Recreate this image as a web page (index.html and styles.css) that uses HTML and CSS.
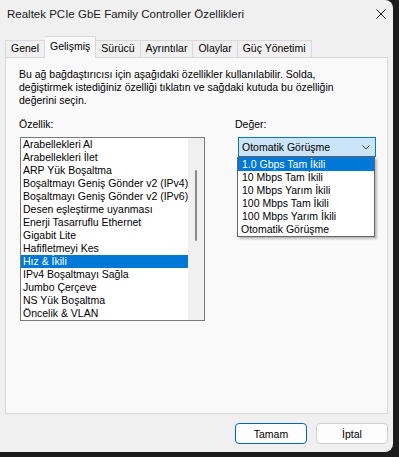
FILE: index.html
```html
<!DOCTYPE html>
<html lang="tr">
<head>
  <meta charset="UTF-8" />
  <title>Realtek PCIe GbE Family Controller Özellikleri</title>
  <link rel="stylesheet" href="styles.css">
</head>
<body>

  <div class="window">

    <!-- Başlık çubuğu -->
    <div class="titlebar">
      <span class="title">Realtek PCIe GbE Family Controller Özellikleri</span>
      <svg class="close" width="10" height="10" viewBox="0 0 10 10">
        <path d="M0.5 0.5 L9.5 9.5 M9.5 0.5 L0.5 9.5" stroke="#1a1a1a" stroke-width="1" fill="none" />
      </svg>
    </div>

    <!-- Sekmeler -->
    <div class="tabs">
      <div class="tab">Genel</div>
      <div class="tab active">Gelişmiş</div>
      <div class="tab">Sürücü</div>
      <div class="tab">Ayrıntılar</div>
      <div class="tab">Olaylar</div>
      <div class="tab">Güç Yönetimi</div>
    </div>

    <div class="panel">
      <p class="desc">
        Bu ağ bağdaştırıcısı için aşağıdaki özellikler kullanılabilir. Solda,<br>
        değiştirmek istediğiniz özelliği tıklatın ve sağdaki kutuda bu özelliğin<br>
        değerini seçin.
      </p>

      <div class="columns">
        <div class="col">
          <div class="label">Özellik:</div>
          <div class="listbox">
            <div class="items">
              <div class="item">Arabellekleri Al</div>
              <div class="item">Arabellekleri İlet</div>
              <div class="item">ARP Yük Boşaltma</div>
              <div class="item">Boşaltmayı Geniş Gönder v2 (IPv4)</div>
              <div class="item">Boşaltmayı Geniş Gönder v2 (IPv6)</div>
              <div class="item">Desen eşleştirme uyanması</div>
              <div class="item">Enerji Tasarruflu Ethernet</div>
              <div class="item">Gigabit Lite</div>
              <div class="item">Hafifletmeyi Kes</div>
              <div class="item selected">Hız &amp; İkili</div>
              <div class="item">IPv4 Boşaltmayı Sağla</div>
              <div class="item">Jumbo Çerçeve</div>
              <div class="item">NS Yük Boşaltma</div>
              <div class="item">Öncelik &amp; VLAN</div>
            </div>
            <div class="scrollbar"><div class="thumb"></div></div>
          </div>
        </div>

        <div class="col">
          <div class="label">Değer:</div>
          <div class="combo">
            <span>Otomatik Görüşme</span>
            <svg class="chevron" width="8" height="5" viewBox="0 0 8 5">
              <path d="M0.5 0.5 L4 4 L7.5 0.5" stroke="#444" stroke-width="1" fill="none" />
            </svg>
            <div class="dropdown">
              <div class="option selected">1.0 Gbps Tam İkili</div>
              <div class="option">10 Mbps Tam İkili</div>
              <div class="option">10 Mbps Yarım İkili</div>
              <div class="option">100 Mbps Tam İkili</div>
              <div class="option">100 Mbps Yarım İkili</div>
              <div class="option last">Otomatik Görüşme</div>
            </div>
          </div>
        </div>
      </div>
    </div>

    <div class="actions">
      <button class="btn default">Tamam</button>
      <button class="btn">İptal</button>
    </div>

  </div>

</body>
</html>
```

FILE: styles.css
```css
* {
  margin: 0;
  padding: 0;
  box-sizing: border-box;
}

body {
  font-family: 'Liberation Sans', Arial, sans-serif;
  font-size: 10.5px;
  color: #000;
  background: #1c1c1c;
  width: 399px;
  height: 457px;
  overflow: hidden;
}

.window {
  width: 393px;
  height: 452px;
  background: #f0f0f0;
  border-radius: 0 8px 8px 0;
}

.titlebar {
  height: 30px;
  display: flex;
  align-items: center;
  justify-content: space-between;
  padding: 0 7px 3px 7px;
  font-size: 11.5px;
  color: #1a1a1a;
}

/* tabs */
.tabs {
  display: flex;
  align-items: flex-end;
  height: 21px;
  margin: 6px 0 0 5px;
}

.tab {
  height: 17px;
  line-height: 15px;
  padding: 0 5px;
  border: 1px solid #d9d9d9;
  border-bottom: none;
  border-left: none;
  background: #f0f0f0;
}

.tab:first-child {
  border-left: 1px solid #d9d9d9;
}

.tab.active {
  height: 22px;
  margin-bottom: -1px;
  padding-top: 2px;
  line-height: 14px;
  background: #f9f9f9;
  position: relative;
  z-index: 1;
}

.panel {
  height: 357px;
  margin: 0 5px;
  padding: 10px 13px;
  background: #f9f9f9;
  border: 1px solid #d9d9d9;
}

.desc {
  line-height: 13px;
}

.columns {
  display: grid;
  grid-template-columns: 216px 1fr;
  margin-top: 11px;
}

.label {
  line-height: 13px;
  margin-bottom: 6px;
}

/* listbox */
.listbox {
  display: flex;
  width: 185px;
  height: 184px;
  margin-left: 1px;
  border: 1px solid #7a7a7a;
  background: #fff;
}

.items {
  flex: 1;
}

.item {
  height: 13px;
  line-height: 13px;
  padding-left: 2px;
  white-space: nowrap;
  overflow: hidden;
}

.item.selected {
  background: #0078d7;
  color: #fff;
}

.scrollbar {
  width: 17px;
  background: #f0f0f0;
  padding-top: 32px;
}

.thumb {
  width: 2px;
  height: 71px;
  margin-left: 7px;
  border-radius: 1px;
  background: #8b8b8b;
}

/* combo */
.combo {
  position: relative;
  width: 138px;
  height: 20px;
  margin-left: 3px;
  padding-left: 3px;
  display: flex;
  align-items: center;
  justify-content: space-between;
  border: 1px solid #0078d7;
  background: #cce4f7;
}

.chevron {
  margin-right: 5px;
}

.dropdown {
  position: absolute;
  top: 19px;
  left: -2px;
  width: 138px;
  border: 1px solid #646464;
  background: #fff;
  box-shadow: 2px 2px 2px rgba(0, 0, 0, 0.25);
  z-index: 2;
}

.option {
  height: 13px;
  line-height: 13px;
  padding-left: 4px;
}

.option.last {
  padding-left: 3px;
}

.option.selected {
  background: #0078d7;
  color: #fff;
}

/* buttons */
.actions {
  display: flex;
  justify-content: flex-end;
  gap: 9px;
  margin: 9px 5px 0 0;
}

.btn {
  width: 72px;
  height: 21px;
  font-family: 'Liberation Sans', Arial, sans-serif;
  font-size: 10.5px;
  color: #000;
  background: #fdfdfd;
  border: 1px solid #d0d0d0;
  border-radius: 4px;
}

.btn.default {
  border-color: #0067c0;
}
```
